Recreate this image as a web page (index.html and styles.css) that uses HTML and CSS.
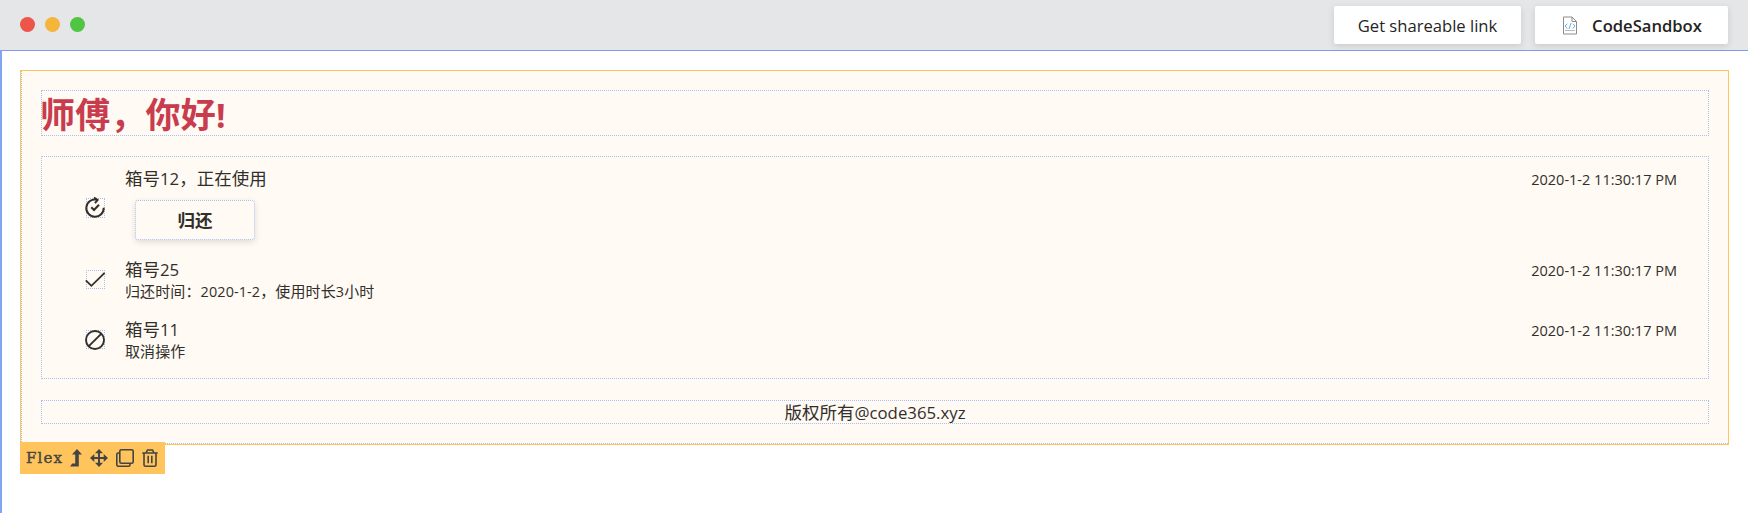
FILE: index.html
```html
<!DOCTYPE html>
<html lang="zh-CN">
<head>
<meta charset="utf-8">
<title>Flex</title>
<link rel="stylesheet" href="styles.css">
</head>
<body>
<div class="app">
  <header class="topbar">
    <div class="lights"><i class="light red"></i><i class="light yellow"></i><i class="light green"></i></div>
    <div class="actions">
      <button class="action share"><span class="share-label">Get shareable link</span></button>
      <button class="action sandbox">
        <svg class="file-icon" width="16" height="19" viewBox="0 0 16 19" fill="none"><path d="M1.5 1h8.5l4.5 4.5V18h-13z" fill="#fff" stroke="#8c8c8c"/><path d="M10 1v4.5h4.5" stroke="#8c8c8c"/><path d="M3 14.5h10" stroke="#bbb"/><path d="M5.3 7.7L3 10l2.3 2.6M10.7 7.7L13 10l-2.3 2.6M9 7l-2 6" stroke="#69afe5"/></svg>
        <span class="sandbox-label">CodeSandbox</span>
      </button>
    </div>
  </header>
  <main class="canvas">
    <section class="frame">
      <div class="frame-inner">
        <h1 class="title dotted">师傅，你好<span class="latin">!</span></h1>
        <div class="list dotted">
          <article class="item first">
            <span class="item-icon dotted"><svg width="20" height="20" viewBox="0 0 20 20" fill="none" stroke="#322f2b" stroke-width="2"><path d="M18.7 9.8A8.7 8.7 0 1 1 11.8 1.6"/><path d="M9 -.5l3.6 2.4L10 5.2"/><path d="M6.3 9.3l2.7 2.7 5-5.3"/></svg></span>
            <div class="item-body">
              <p class="name">箱号<span class="latin">12</span>，正在使用</p>
              <button class="return dotted">归还</button>
            </div>
            <time class="time">2020-1-2 11:30:17 PM</time>
          </article>
          <article class="item second">
            <span class="item-icon dotted"><svg width="20" height="20" viewBox="0 0 20 20" fill="none" stroke="#322f2b" stroke-width="1.8"><path d="M.8 10.3l5.6 5.5L19.6 2.8"/></svg></span>
            <div class="item-body">
              <p class="name">箱号<span class="latin">25</span></p>
              <p class="note">归还时间：<span class="latin">2020-1-2</span>，使用时长<span class="latin">3</span>小时</p>
            </div>
            <time class="time">2020-1-2 11:30:17 PM</time>
          </article>
          <article class="item third">
            <span class="item-icon dotted"><svg width="20" height="20" viewBox="0 0 20 20" fill="none" stroke="#322f2b" stroke-width="1.9"><circle cx="10" cy="10" r="9"/><path d="M3.8 16.2L16.2 3.8"/></svg></span>
            <div class="item-body">
              <p class="name">箱号<span class="latin">11</span></p>
              <p class="note">取消操作</p>
            </div>
            <time class="time">2020-1-2 11:30:17 PM</time>
          </article>
        </div>
        <footer class="copyright dotted">版权所有<span class="latin">@code365.xyz</span></footer>
      </div>
      <div class="toolbar">
        <span class="tool-name">Flex</span>
        <svg class="up" width="12" height="18" viewBox="0 0 12 18"><path d="M7 0l5 5.5H8.8V17.5H0L2.2 14.5H5.2V5.5H2z" fill="#444"/></svg>
        <svg class="move" width="18" height="18" viewBox="0 0 18 18" fill="#444"><path d="M9 0l4 4.3h-3V8h3.7V5L18 9l-4.3 4v-3H10v3.7h3L9 18l-4-4.3h3V10H4.3v3L0 9l4.3-4v3H8V4.3H5z"/></svg>
        <svg class="copy" width="18" height="18" viewBox="0 0 18 18" fill="none" stroke="#444" stroke-width="1.6"><rect x="3.8" y=".8" width="13.4" height="13.4" rx="1.5"/><path d="M3.8 4H2.3Q.8 4 .8 5.5v10.2q0 1.5 1.5 1.5h10.2q1.5 0 1.5-1.5v-1.5"/></svg>
        <svg class="trash" width="16" height="18" viewBox="0 0 16 18" fill="none" stroke="#444" stroke-width="1.6"><path d="M.3 4h15.4M4 4l1.5-3h5L12 4M2 4v11.7q0 1.5 1.5 1.5h9q1.5 0 1.5-1.5V4M6.2 6.8v7.4M9.8 6.8v7.4"/></svg>
      </div>
    </section>
  </main>
</div>
</body>
</html>
```
FILE: styles.css
```css
* { box-sizing: border-box; }
body { margin: 0; background: #fff; color: #322f2b; font-family: "Noto Sans CJK SC", sans-serif; font-size: 17.5px; }
h1, p { margin: 0; white-space: nowrap; }
button { font: inherit; color: inherit; padding: 0; border: 0; }
.app { height: 513px; display: flex; flex-direction: column; overflow: hidden; }
.topbar { height: 50px; flex: none; background: #e5e6e8; display: flex; justify-content: space-between; padding: 6px 20px 0; }
.lights { display: flex; gap: 10px; padding-top: 11px; }
.light { width: 15px; height: 15px; border-radius: 50%; }
.red { background: #ec5548; }
.yellow { background: #f5b43a; }
.green { background: #50c443; }
.actions { display: flex; gap: 14px; }
.action { height: 38px; background: #fff; border-radius: 2px; color: #252423; display: flex; align-items: center; justify-content: center; font-family: "Open Sans", sans-serif; font-size: 16.6px; white-space: nowrap; box-shadow: 0 2px 7px rgba(0, 0, 0, .12); }
.share { width: 187px; }
.sandbox { width: 193px; gap: 14px; padding-left: 1px; font-weight: 600; }
.file-icon { flex: none; }
.canvas { flex: 1; border-top: 1px solid #7b9fee; border-left: 2px solid #82a5f2; padding: 19px 19px 0 18px; }
.frame { position: relative; height: 375px; border: 1px solid #ffc45c; background: #fffaf4; }
.frame-inner { height: 373px; padding: 19px 19px 0 19px; border: dotted #a9bee9; border-width: 0 0 1px 1px; display: flex; flex-direction: column; }
.dotted { border: 1px dotted #a9bfef; }
.latin { font-family: "Open Sans", sans-serif; font-size: .96em; }
.title { height: 46px; line-height: 43px; color: #c83c4d; font-size: 35px; font-weight: 700; text-indent: -2px; letter-spacing: .2px; flex: none; }
.list { height: 223px; margin-top: 20px; padding: 11px 31px 0 44px; flex: none; }
.item { display: flex; align-items: flex-start; }
.first { height: 91px; }
.second { height: 60px; }
.item-icon { width: 19px; height: 19px; flex: none; display: flex; }
.item-icon svg { flex: none; overflow: visible; margin: -1px 0 0 -2px; }
.first .item-icon { height: 20px; margin-top: 30px; }
.second .item-icon { margin-top: 11px; }
.third .item-icon { margin-top: 11px; }
.item-body { flex: 1; padding-left: 20px; }
.name { line-height: 20px; height: 23px; }
.note { font-size: 15px; line-height: 19px; height: 20px; margin-top: -1px; letter-spacing: .12px; }
.time { font-family: "Open Sans", sans-serif; font-size: 14.5px; line-height: 24px; }
.return { display: block; width: 120px; height: 40px; margin: 9px 0 0 10px; padding-bottom: 2px; background: #fffaf4; font-weight: 700; border-radius: 3px; box-shadow: 0 2px 6px rgba(0, 0, 0, .13); }
.copyright { height: 24px; margin-top: 21px; line-height: 22px; text-align: center; flex: none; }
.toolbar { position: absolute; left: -1px; top: 371px; width: 145px; height: 32px; padding: 0 7px 0 6px; background: #ffc45c; color: #444; display: flex; align-items: center; justify-content: space-between; }
.tool-name { font-family: "DejaVu Serif", serif; font-size: 15px; letter-spacing: 1.1px; margin-right: -1px; -webkit-text-stroke: .4px #444; }
```
